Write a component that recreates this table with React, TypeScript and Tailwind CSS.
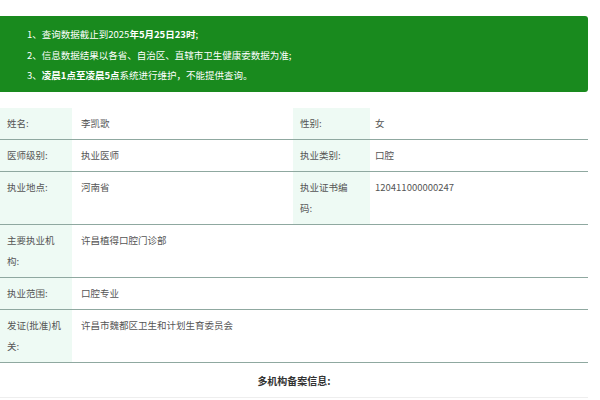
import React from "react";

const font = { fontFamily: '"Noto Sans CJK SC", "Noto Sans", sans-serif' };

function Label({ children }: { children: React.ReactNode }) {
  return (
    <div className="bg-[#eefaf4] pl-[7px] pr-[10px] py-[5px] leading-[21px] text-[#555]">
      {children}
    </div>
  );
}

function Label2({ children }: { children: React.ReactNode }) {
  return (
    <div className="bg-[#eefaf4] pl-[7px] pr-[14px] py-[5px] leading-[21px] text-[#555]">
      {children}
    </div>
  );
}

function Value({ children, pl = "pl-[9px]" }: { children: React.ReactNode; pl?: string }) {
  return (
    <div className={`${pl} pr-2 py-[5px] leading-[21px] text-[#555]`}>{children}</div>
  );
}

function PairRow({ a, av, b, bv }: { a: string; av: string; b: string; bv: string }) {
  return (
    <div className="grid grid-cols-[72px_221px_77px_1fr] border-b border-[#8fa8a0]">
      <Label>{a}</Label>
      <div className="pl-[9px] pr-2 py-[5px] leading-[21px] text-[#555]">{av}</div>
      <Label2>{b}</Label2>
      <div className="pl-[5px] pr-2 py-[5px] leading-[21px] text-[#555]">{bv}</div>
    </div>
  );
}

function FullRow({ a, av }: { a: string; av: string }) {
  return (
    <div className="grid grid-cols-[72px_1fr] border-b border-[#8fa8a0]">
      <Label>{a}</Label>
      <div className="pl-[9px] pr-2 py-[5px] leading-[21px] text-[#555]">{av}</div>
    </div>
  );
}

export default function App() {
  return (
    <div className="w-[600px] h-[400px] bg-white overflow-hidden text-[9.5px]" style={font}>
      <div className="w-[588px] pt-[16px]">
        <div className="bg-[#198a1e] rounded-r-[3px] h-[76px] pl-[27px] pt-[8px] text-white leading-[20.5px]">
          <div>
            1、查询数据截止到2025<span className="font-bold">年5月25日23时</span>;
          </div>
          <div>2、信息数据结果以各省、自治区、直辖市卫生健康委数据为准;</div>
          <div>
            3、<span className="font-bold">凌晨1点至凌晨5点</span>系统进行维护，不能提供查询。
          </div>
        </div>

        <div className="mt-[16px]">
          <PairRow a="姓名:" av="李凯歌" b="性别:" bv="女" />
          <PairRow a="医师级别:" av="执业医师" b="执业类别:" bv="口腔" />
          <PairRow a="执业地点:" av="河南省" b="执业证书编码:" bv="120411000000247" />
          <FullRow a="主要执业机构:" av="许昌植得口腔门诊部" />
          <FullRow a="执业范围:" av="口腔专业" />
          <FullRow a="发证(批准)机关:" av="许昌市魏都区卫生和计划生育委员会" />
          <div className="h-[35px] flex items-center justify-center font-bold text-[#333] text-[10px] border-b border-[#eeeeee]">
            多机构备案信息:
          </div>
        </div>
      </div>
    </div>
  );
}
